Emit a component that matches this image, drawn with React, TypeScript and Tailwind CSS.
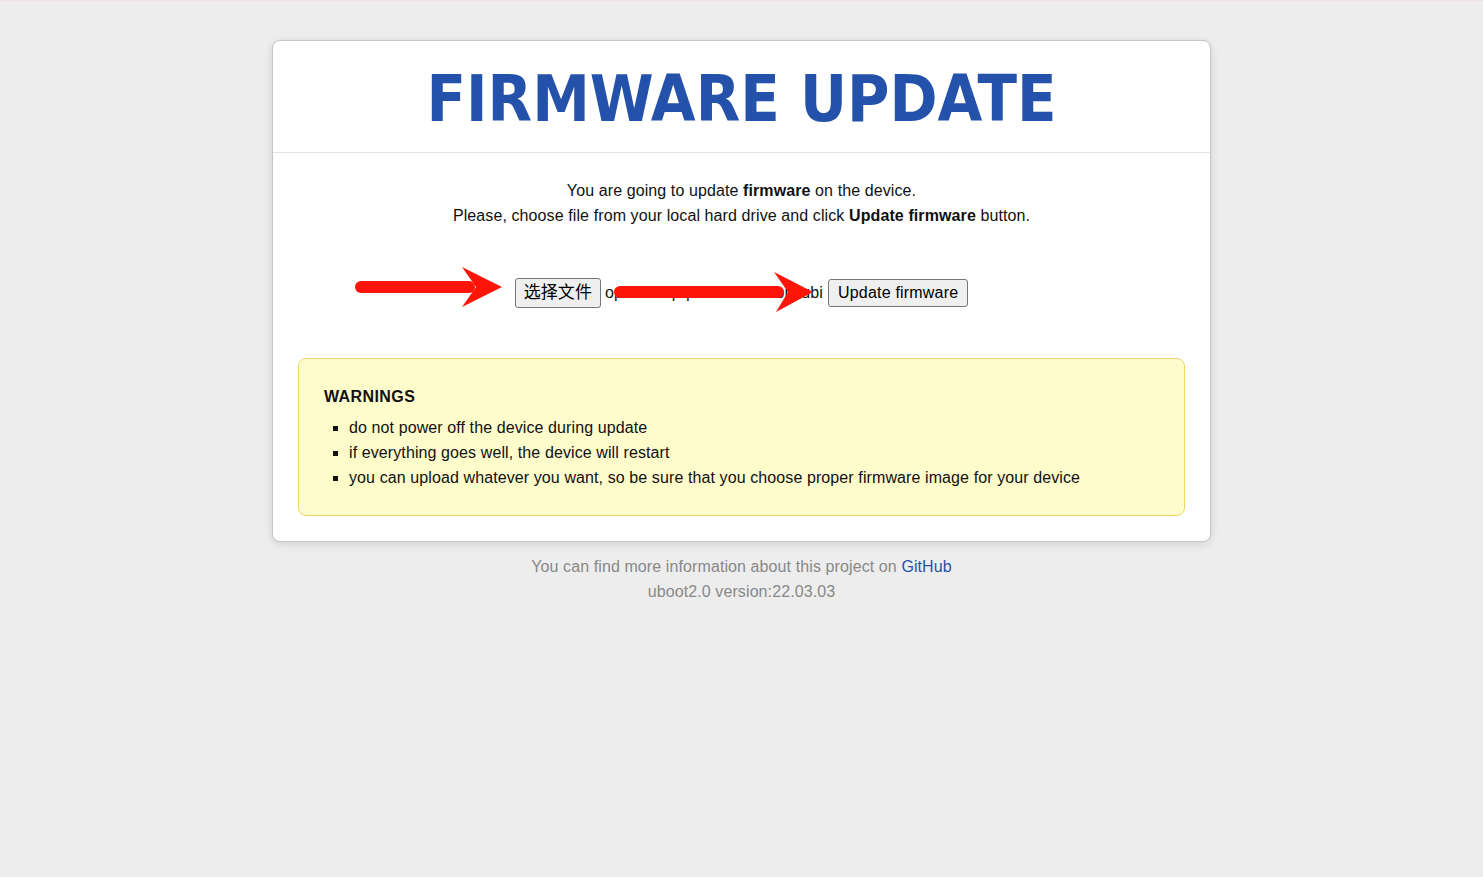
import React from 'react';

const ArrowMarks: React.FC = () => (
    <svg className="absolute top-0 left-0 pointer-events-none" width="1483" height="877" viewBox="0 0 1483 877">
        <g fill="#ff1408">
            <rect x="355" y="280" width="120" height="12" rx="6" />
            <polygon points="462,266 502,286 462,306 476,286" />
            <rect x="614" y="285" width="170" height="12" rx="6" />
            <polygon points="774,271 813,291 776,311 788,291" />
        </g>
    </svg>
);

const Button: React.FC<{ children: React.ReactNode; className?: string }> = ({ children, className = '' }) => (
    <button className={`bg-[#efefef] border border-[#767676] rounded-[3px] text-[16px] leading-[20px] text-black ${className}`}>
        {children}
    </button>
);

export default function App() {
    return (
        <div className="relative min-h-[877px] bg-[#ededed] border-t border-[#f2e4e4] font-['Liberation_Sans',Arial,sans-serif] text-[16px] tracking-[0.1px] text-[#111]">
            <div className="flex flex-col items-center pt-[39px]">
                <div className="w-[939px] bg-white border border-[#c4c4c4] rounded-[8px] shadow-[0_2px_8px_rgba(0,0,0,0.12)]">
                    <div className="h-[112px] flex items-center justify-center border-b border-[#e4e4e4]">
                        <h1 className="font-['DejaVu_Sans_Condensed','DejaVu_Sans',sans-serif] [font-stretch:condensed] font-bold text-[64.4px] leading-none tracking-normal text-[#2452aa] pt-[6px]">
                            FIRMWARE UPDATE
                        </h1>
                    </div>
                    <div className="px-[25px] pt-[25px] pb-[25px]">
                        <p className="text-center leading-[25px]">
                            You are going to update <b>firmware</b> on the device.
                            <br />
                            Please, choose file from your local hard drive and click <b>Update firmware</b> button.
                        </p>
                        <form className="flex items-center justify-center mt-[50px] mb-[50px] h-[30px]">
                            <Button className="h-[30px] px-[8px] font-['Liberation_Sans','Noto_Sans_CJK_SC',sans-serif] text-[17px]">选择文件</Button>
                            <span className="ml-[4px] whitespace-nowrap">openwrt-ipq60xx-re-factory.ubi</span>
                            <Button className="ml-[5px] h-[28px] px-[9px] tracking-[0.2px]">Update firmware</Button>
                        </form>
                        <div className="bg-[#fffccc] border border-[#f0d36a] rounded-[8px] p-[25px]">
                            <h3 className="font-bold leading-[25px] mb-[6px] tracking-[0.4px]">WARNINGS</h3>
                            <ul className="list-[square] pl-[25px] leading-[25px]">
                                <li>do not power off the device during update</li>
                                <li>if everything goes well, the device will restart</li>
                                <li>you can upload whatever you want, so be sure that you choose proper firmware image for your device</li>
                            </ul>
                        </div>
                    </div>
                </div>
                <div className="mt-[12px] text-center leading-[25px] text-[#888]">
                    You can find more information about this project on <a className="text-[#2b51a3]">GitHub</a>
                    <br />
                    uboot2.0 version:22.03.03
                </div>
            </div>
            <ArrowMarks />
        </div>
    );
}
